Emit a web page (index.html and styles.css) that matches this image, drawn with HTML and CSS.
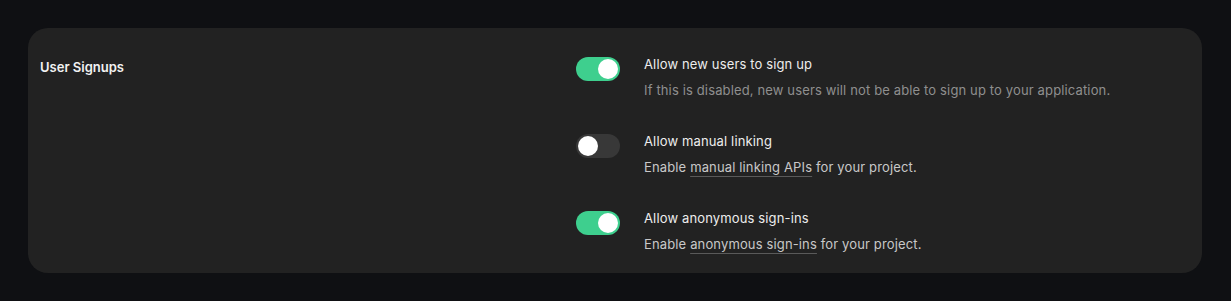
FILE: index.html
```html
<!DOCTYPE html>
<html>
<head>
<meta charset="utf-8">
<link rel="stylesheet" href="styles.css">
</head>
<body>
<div class="card">
  <div class="label">User Signups</div>
  <div class="options">
    <div class="option">
      <span class="toggle on"><span class="knob"></span></span>
      <div class="text">
        <div class="title">Allow new users to sign up</div>
        <div class="desc">If this is disabled, new users will not be able to sign up to your application.</div>
      </div>
    </div>
    <div class="option">
      <span class="toggle"><span class="knob"></span></span>
      <div class="text">
        <div class="title">Allow manual linking</div>
        <div class="desc light">Enable <a class="link">manual linking APIs</a> for your project.</div>
      </div>
    </div>
    <div class="option">
      <span class="toggle on"><span class="knob"></span></span>
      <div class="text">
        <div class="title">Allow anonymous sign-ins</div>
        <div class="desc light">Enable <a class="link">anonymous sign-ins</a> for your project.</div>
      </div>
    </div>
  </div>
</div>
</body>
</html>
```
FILE: styles.css
```css
html, body {
  margin: 0;
  background: #0f1013;
}
body {
  padding: 28px 29px 29px 28px;
  font-family: Inter, "Noto Sans", sans-serif;
  -webkit-font-smoothing: antialiased;
}
.card {
  background: #222222;
  border-radius: 20px;
  display: grid;
  grid-template-columns: 536px 1fr;
  padding: 29px 12px 19px 12px;
}
.label {
  color: #f2f2f2;
  font-size: 13px;
  font-weight: 600;
  line-height: 20px;
}
.options {
  display: flex;
  flex-direction: column;
  gap: 34px;
}
.option {
  display: flex;
  gap: 24px;
  align-items: flex-start;
}
.toggle {
  flex: none;
  width: 44px;
  height: 24px;
  border-radius: 12px;
  background: #383838;
  display: flex;
  align-items: center;
  padding: 0 2px;
  box-sizing: border-box;
}
.toggle.on {
  background: #3ecf8e;
  justify-content: flex-end;
}
.knob {
  width: 20px;
  height: 20px;
  border-radius: 50%;
  background: #ffffff;
}
.text {
  display: flex;
  flex-direction: column;
  gap: 9px;
  letter-spacing: 0.14px;
}
.title {
  color: #ededed;
  font-size: 13px;
  line-height: 14px;
}
.desc {
  color: #8f8f8f;
  font-size: 13px;
  line-height: 20px;
}
.desc.light {
  color: #c8c8c8;
}
.link {
  color: inherit;
  text-decoration: underline;
  text-decoration-color: #5a5a5a;
  text-underline-offset: 4px;
}
```
